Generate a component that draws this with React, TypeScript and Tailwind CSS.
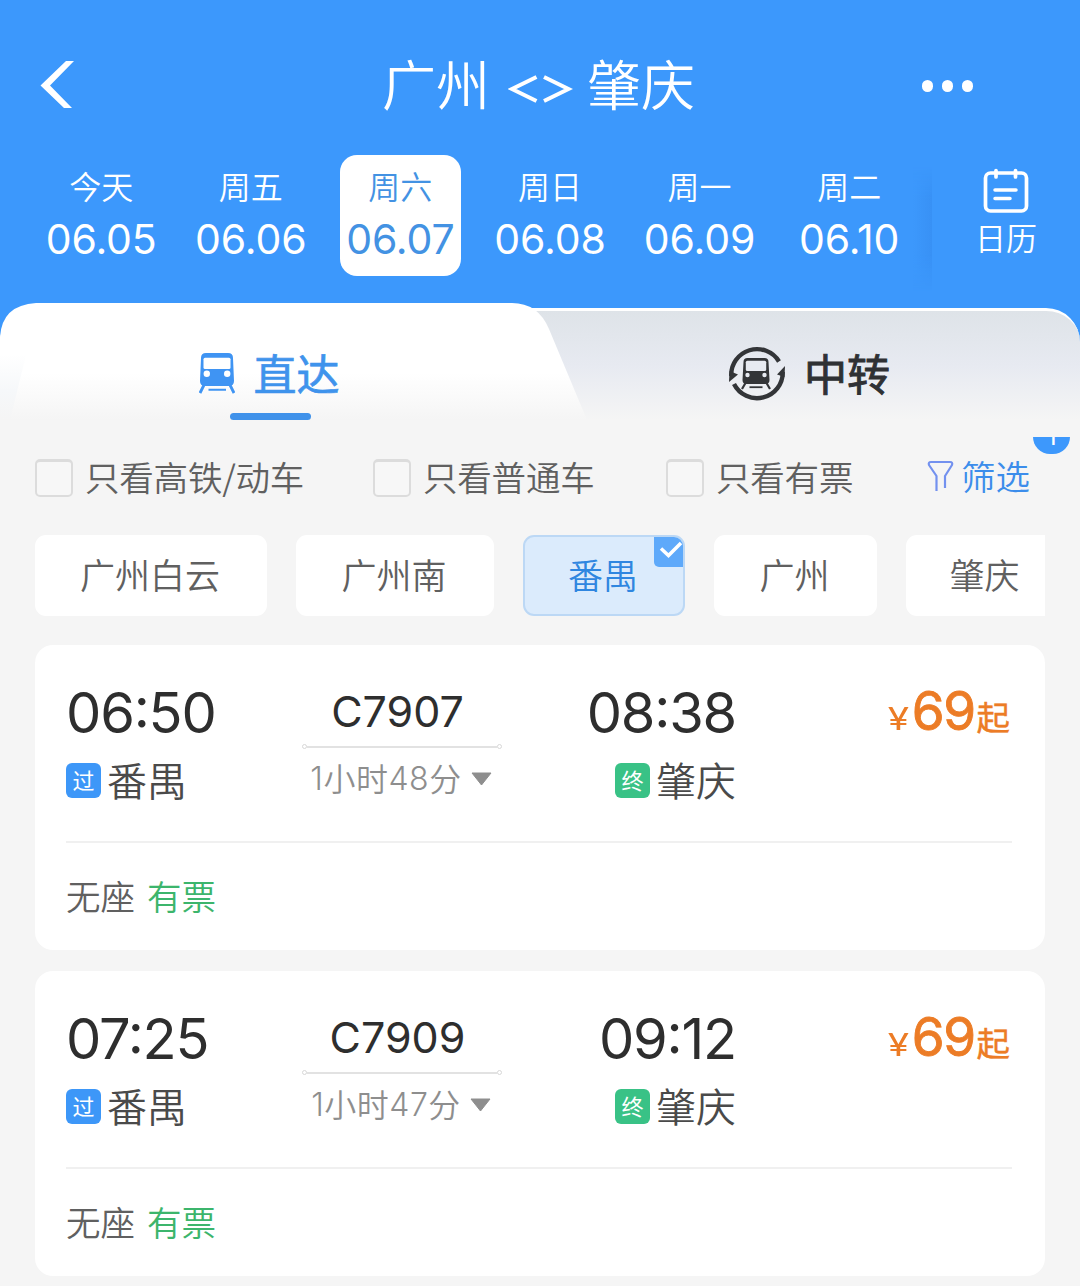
import React from "react";

const days = [
  { label: "今天", date: "06.05" },
  { label: "周五", date: "06.06" },
  { label: "周六", date: "06.07", active: true },
  { label: "周日", date: "06.08" },
  { label: "周一", date: "06.09" },
  { label: "周二", date: "06.10" },
];

const stations = [
  { name: "广州白云", width: "w-[232px]" },
  { name: "广州南", width: "w-[198px]" },
  { name: "番禺", width: "w-[162px]", active: true },
  { name: "广州", width: "w-[163px]" },
  { name: "肇庆", width: "w-[159px]" },
];

const trains = [
  { depart: "06:50", arrive: "08:38", code: "C7907", duration: ["1", "小时", "48", "分"] },
  { depart: "07:25", arrive: "09:12", code: "C7909", duration: ["1", "小时", "47", "分"] },
];

const NUM = "font-['Inter',sans-serif]";
const TIME =
  "font-['Inter',sans-serif] h-[60px] text-[56px] leading-[60px] tracking-[-1.200px] text-[#2e2e2e] [font-feature-settings:'case']";

function Header() {
  return (
    <header className="flex h-[150px] items-start text-white">
      <svg className="mt-[60px] ml-[38px] h-[50px] w-[40px]" viewBox="0 0 40 50" fill="none">
        <path d="M28 1H36L12 25.500L34 48H26L2.500 25.500Z" fill="white" />
      </svg>
      <h1 className="mt-[54px] ml-[304px] flex h-[58px] w-[540px] items-center text-[54px] leading-none font-[350]">
        <span>广州</span>
        <svg className="mt-[11px] mr-[14px] ml-[18px] h-[32px] w-[65px]" viewBox="0 0 65 32" fill="none" stroke="white" strokeWidth="4">
          <path d="M28.500 4L4 16L28.500 28M36 4L60.500 16L36 28" />
        </svg>
        <span>肇庆</span>
      </h1>
      <div className="mt-[80px] flex gap-[9px]">
        <i className="h-[12px] w-[11px] rounded-full bg-white" />
        <i className="h-[12px] w-[11px] rounded-full bg-white" />
        <i className="h-[12px] w-[11px] rounded-full bg-white" />
      </div>
    </header>
  );
}

function CalendarIcon() {
  return (
    <svg className="h-[46px] w-[46px]" viewBox="0 0 46 46" fill="none" stroke="white" strokeWidth="3.700" strokeLinecap="round">
      <rect x="2.500" y="5" width="41" height="38" rx="5" />
      <path d="M13 2.500V9M32.500 2.500V9" />
      <path d="M12 22H33M12 30.500H27" strokeWidth="3.500" />
    </svg>
  );
}

function DateStrip() {
  return (
    <div className="flex h-[135px] pt-[5px] text-white">
      <div className="flex w-[932px] gap-[28.600px] pl-[40.700px]">
        {days.map((d) => (
          <div
            key={d.date}
            className={
              "flex h-[121px] w-[121px] shrink-0 flex-col items-center rounded-[17px] " +
              (d.active ? "bg-white text-[#4392e3]" : "")
            }
          >
            <span className="mt-[14px] text-[32px] leading-[32px] font-[350]">{d.label}</span>
            <span className={NUM + " mt-[18px] text-[41px] leading-[40px] tracking-[-0.1px]"}>{d.date}</span>
          </div>
        ))}
        <div className="mt-[12px] -ml-[25px] h-[125px] w-[28px] bg-linear-to-r from-[#3c98fc] to-[#3891f5] [mask-image:linear-gradient(to_bottom,transparent,black_25%,black_70%,transparent)]" />
      </div>
      <div className="flex w-[148px] flex-col items-center pt-[13px]">
        <CalendarIcon />
        <span className="mt-[7px] text-[31px] leading-[32px] font-[350]">日历</span>
      </div>
    </div>
  );
}

function TrainIcon({ className }: { className: string }) {
  return (
    <svg className={className} viewBox="0 0 36 41" fill="none">
      <path d="M7 0H29Q34 0 34 5L35 28Q35 33 30 33H6Q1 33 1 28L2 5Q2 0 7 0Z" fill="currentColor" />
      <rect x="4.500" y="4.800" width="27" height="11.200" rx="1.500" fill="white" />
      <circle cx="7.800" cy="20.800" r="3.200" fill="white" />
      <circle cx="28.200" cy="20.800" r="3.200" fill="white" />
      <path d="M5 32L1 40M31 32L35 40" stroke="currentColor" strokeWidth="2.800" />
      <path d="M9.500 36.700H27" stroke="currentColor" strokeWidth="2" />
    </svg>
  );
}

function TransferIcon() {
  return (
    <svg className="h-[56px] w-[58px] text-[#333538]" viewBox="0 0 58 56" fill="none">
      <path d="M3.300 30A25.700 25.500 0 0 1 51 15.500" stroke="currentColor" strokeWidth="4.400" />
      <path d="M6 38A25.700 25.500 0 0 0 54.700 26" stroke="currentColor" strokeWidth="4.400" />
      <path d="M1 36L1.500 25L10 28.500Z" fill="currentColor" />
      <path d="M57 20L49 28.500L56.500 31Z" fill="currentColor" />
      <path d="M19.500 12H36.500Q40.500 12 40.500 16L41.500 34Q41.500 38 37.500 38H18.500Q14.500 38 14.500 34L15.500 16Q15.500 12 19.500 12Z" fill="currentColor" />
      <rect x="17.800" y="14.800" width="20.400" height="10.200" rx="1.500" fill="#e7eaf1" />
      <circle cx="19.500" cy="29" r="2.200" fill="#e7eaf1" />
      <circle cx="36.500" cy="29" r="2.200" fill="#e7eaf1" />
      <path d="M17.500 37L14 43M38.500 37L42 43" stroke="currentColor" strokeWidth="2.200" />
      <path d="M21.500 41.200H34.500" stroke="currentColor" strokeWidth="1.800" />
    </svg>
  );
}

function Tabs() {
  return (
    <div className="relative flex h-[125px] -mb-[8px]">
      <div className="absolute inset-x-0 top-[5px] bottom-[8px] rounded-t-[34px] border-t-[3px] border-white bg-linear-to-b from-[#dee3e8] via-[#e7eaf1] to-[#f5f5f5]" />
      <div className="absolute top-[44px] left-0 h-[73px] w-[60px] bg-linear-to-b from-white from-10% via-[#f6f8fa] via-60% to-[#f5f5f5]" />
      <div className="relative z-10 flex h-[117px] w-[590px] justify-start bg-linear-to-b from-white from-60% to-[#f5f5f5] [clip-path:path('M0_34Q2_2_36_0H512Q538_0_549_26L587_117H10L26_52L0_52Z')]">
        <TrainIcon className="mt-[50px] ml-[199px] h-[41px] w-[36px] text-[#3f94f3]" />
        <div className="-ml-[5px] flex w-[81px] flex-col items-center">
          <span className="mt-[48px] ml-[52px] text-[43px] leading-[43px] font-normal whitespace-nowrap text-[#3f93ec] [-webkit-text-stroke:0.7px_#3f93ec]">直达</span>
          <span className="mt-[19px] h-[8px] w-[81px] rounded-full bg-[#4092ea]" />
        </div>
      </div>
      <div className="relative flex items-start pl-[138px]">
        <div className="mt-[43px]">
          <TransferIcon />
        </div>
        <span className="mt-[48px] ml-[18px] text-[43px] leading-[43px] font-normal text-[#2f3134] [-webkit-text-stroke:0.9px_#2f3134]">中转</span>
      </div>
    </div>
  );
}

function Check({ label, className }: { label: string; className: string }) {
  return (
    <div className={"flex shrink-0 items-center " + className}>
      <span className="mb-[2px] h-[38px] w-[38px] rounded-[5px] border-2 border-t-[3px] border-[#dcdcdc] bg-[#f7f7f7]" />
      <span className="mb-[6px] ml-[12px] text-[34.500px] leading-[40px] font-[350] tracking-[-0.200px] whitespace-nowrap text-[#606060]">{label}</span>
    </div>
  );
}

function Filters() {
  return (
    <div className="relative flex h-[83px] items-center pl-[35px]">
      <Check label="只看高铁/动车" className="w-[338px]" />
      <Check label="只看普通车" className="w-[293px]" />
      <Check label="只看有票" className="w-[261px]" />
      <svg className="mb-[5px] h-[33px] w-[27px]" viewBox="0 0 27 33" fill="none" stroke="#7391ef" strokeWidth="2.200" strokeLinejoin="round">
        <path d="M9.500 31V16L2 5Q1 2 4 2H23Q26 2 25 5L18 16V28" />
      </svg>
      <span className="mb-[8px] ml-[7px] text-[34.500px] leading-[40px] font-[350] text-[#3c8deb]">筛选</span>
      <div className="absolute top-0 right-[10px] h-[17px] w-[37px] overflow-hidden">
        <div className={NUM + " -mt-[18px] flex h-[35px] items-center justify-center rounded-[17px] bg-[#3d98fc] text-[25px] leading-none text-white"}>1</div>
      </div>
    </div>
  );
}

function StationChips() {
  return (
    <div className="mx-[35px] mt-[15px] flex h-[81px] gap-[29px] overflow-hidden">
      {stations.map((s) => (
        <div
          key={s.name}
          className={
            "relative flex shrink-0 items-center justify-center rounded-[11px] pr-[2px] pb-[5px] text-[35px] leading-none font-[350] " +
            s.width +
            (s.active
              ? " border-2 border-[#bcd8f5] bg-[#dbebfc] text-[#2f86e0]"
              : " bg-white text-[#606060]")
          }
        >
          {s.name}
          {s.active && (
            <span className="absolute top-0 right-0 h-[30px] w-[29px] overflow-hidden rounded-tr-[9px] rounded-bl-[5px] bg-[#5ea9fa]">
              <svg viewBox="0 0 29 30" fill="none" className="h-[30px] w-[29px]">
                <path d="M7 11.500L14.500 18.500L27 6" stroke="white" strokeWidth="3.500" />
              </svg>
            </span>
          )}
        </div>
      ))}
    </div>
  );
}

function Station({ tag, name, color }: { tag: string; name: string; color: string }) {
  return (
    <div className="flex h-[40px] items-center">
      <span className={"flex h-[35px] w-[35px] items-center justify-center rounded-[6px] pb-[2px] text-[22px] leading-none text-white " + color}>{tag}</span>
      <span className="mb-[2px] ml-[6px] text-[40px] leading-[40px] font-[350] text-[#4a4a4a]">{name}</span>
    </div>
  );
}

function TrainCard({ train }: { train: (typeof trains)[number] }) {
  return (
    <article className="mx-[35px] h-[305px] rounded-[18px] bg-white pr-[33px] pl-[31px]">
      <div className="flex h-[198px] border-b-2 border-[#f0f0f0]">
        <div className="flex w-[236px] flex-col pt-[38px]">
          <span className={TIME}>{train.depart}</span>
          <div className="mt-[17px]">
            <Station tag="过" name="番禺" color="bg-[#3d97f8]" />
          </div>
        </div>
        <div className="flex w-[200px] flex-col items-center pt-[42px]">
          <span className={NUM + " -ml-[9px] text-[43px] leading-[48px] text-[#2e2e2e]"}>{train.code}</span>
          <div className="mt-[9px] flex w-[200px] items-center">
            <i className="h-[5px] w-[5px] rounded-full border border-[#d8d8d8]" />
            <i className="h-[2px] flex-1 bg-[#e2e2e2]" />
            <i className="h-[5px] w-[5px] rounded-full border border-[#d8d8d8]" />
          </div>
          <div className="mt-[8px] flex items-center pr-[2px]">
            <span className="flex items-center text-[32px] leading-[40px] font-[350] tracking-[0.500px] text-[#8e8e8e]">
              {train.duration.map((part, i) => (
                <span key={i} className={i % 2 === 0 ? NUM : "mb-[4px]"}>{part}</span>
              ))}
            </span>
            <svg className="ml-[9px] h-[14px] w-[21px]" viewBox="0 0 21 14">
              <path d="M1 1H20L10.500 13Z" fill="#8e8e8e" stroke="#8e8e8e" strokeLinejoin="round" />
            </svg>
          </div>
        </div>
        <div className="flex w-[234px] flex-col items-end pt-[38px]">
          <span className={TIME}>{train.arrive}</span>
          <div className="mt-[17px]">
            <Station tag="终" name="肇庆" color="bg-[#39c286]" />
          </div>
        </div>
        <div className="flex flex-1 items-baseline justify-end pt-[36px] pr-[2px] text-[#ec7c26]">
          <span className={NUM + " mr-[3px] inline-block origin-right scale-x-125 text-[31px] leading-none"}>¥</span>
          <span className={NUM + " mr-[2px] text-[53px] leading-[60px] font-normal tracking-[-1.500px] [-webkit-text-stroke:0.9px_#ec7c26]"}>69</span>
          <span className="text-[33.500px] leading-none font-normal [-webkit-text-stroke:0.4px_#ec7c26]">起</span>
        </div>
      </div>
      <div className="flex h-[104px] items-center gap-[12px] text-[34.500px] leading-none font-[350]">
        <span className="text-[#606060]">无座</span>
        <span className="text-[#3cb56c]">有票</span>
      </div>
    </article>
  );
}

export default function App() {
  return (
    <div className="h-[1286px] w-[1080px] overflow-hidden bg-[#f5f5f5] font-['Noto_Sans_CJK_SC',sans-serif]">
      <div className="-mb-[42px] h-[345px] bg-[#3c98fc]">
        <Header />
        <DateStrip />
      </div>
      <Tabs />
      <div className="mt-[17px]">
        <Filters />
      </div>
      <StationChips />
      <main className="mt-[29px] flex flex-col gap-[21px]">
        {trains.map((t) => (
          <TrainCard key={t.code} train={t} />
        ))}
      </main>
    </div>
  );
}
